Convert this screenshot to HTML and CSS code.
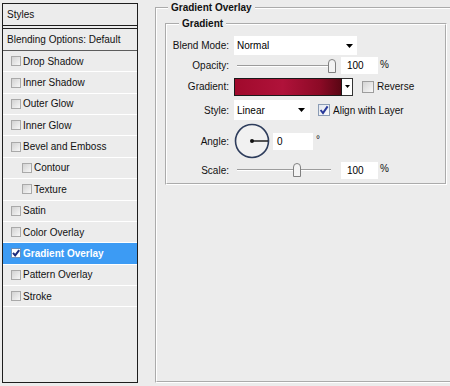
FILE: index.html
```html
<!DOCTYPE html>
<html>
<head>
    <link rel="stylesheet" href="styles.css">
</head>
<body>
    <div class="styles-list">
        <div class="list-head">Styles</div>
        <div class="list-blend">Blending Options: Default</div>
        <div class="list-item"><span class="check"></span>Drop Shadow</div>
        <div class="list-item"><span class="check"></span>Inner Shadow</div>
        <div class="list-item"><span class="check"></span>Outer Glow</div>
        <div class="list-item"><span class="check"></span>Inner Glow</div>
        <div class="list-item"><span class="check"></span>Bevel and Emboss</div>
        <div class="list-item sub"><span class="check"></span>Contour</div>
        <div class="list-item sub"><span class="check"></span>Texture</div>
        <div class="list-item"><span class="check"></span>Satin</div>
        <div class="list-item"><span class="check"></span>Color Overlay</div>
        <div class="list-item active"><span class="check on"><svg width="10" height="10" viewBox="0 0 10 10"><path d="M2 4.8 L4.2 7.4 L8.2 2.2" fill="none" stroke="#1b2a7c" stroke-width="2"/></svg></span>Gradient Overlay</div>
        <div class="list-item"><span class="check"></span>Pattern Overlay</div>
        <div class="list-item"><span class="check"></span>Stroke</div>
    </div>

    <fieldset class="group outer">
        <legend>Gradient Overlay</legend>
        <fieldset class="group inner">
            <legend>Gradient</legend>
            <div class="form">
                <div class="lbl">Blend Mode:</div>
                <div class="ctl">
                    <div class="select blend">Normal<svg width="7" height="4" viewBox="0 0 7 4"><path d="M0 0 H7 L3.5 4 Z" fill="#000"/></svg></div>
                </div>

                <div class="lbl">Opacity:</div>
                <div class="ctl">
                    <div class="slider">
                        <div class="track"></div>
                        <svg class="thumb opacity-thumb" width="8" height="14" viewBox="0 0 8 14"><path d="M0.5 4 Q0.5 0.5 4 0.5 Q7.5 0.5 7.5 4 V13.5 H0.5 Z" fill="#f3f3f3" stroke="#808080"/></svg>
                    </div>
                    <div class="num">100</div>
                    <span class="unit">%</span>
                </div>

                <div class="lbl">Gradient:</div>
                <div class="ctl">
                    <div class="swatch"></div>
                    <div class="swatch-drop"><svg width="5" height="3" viewBox="0 0 5 3"><path d="M0 0 H5 L2.5 3 Z" fill="#000"/></svg></div>
                    <span class="box reverse-box"></span>
                    <span class="box-text">Reverse</span>
                </div>

                <div class="lbl">Style:</div>
                <div class="ctl">
                    <div class="select style-select">Linear<svg width="7" height="4" viewBox="0 0 7 4"><path d="M0 0 H7 L3.5 4 Z" fill="#000"/></svg></div>
                    <span class="box align-box"><svg width="10" height="10" viewBox="0 0 10 10"><path d="M1.6 5 L4 8 L8.6 1.4" fill="none" stroke="#28399a" stroke-width="2"/></svg></span>
                    <span class="box-text">Align with Layer</span>
                </div>

                <div class="lbl">Angle:</div>
                <div class="ctl">
                    <svg class="dial" width="36" height="36" viewBox="0 0 36 36">
                        <circle cx="18" cy="18" r="16.5" fill="#f1f1f1" stroke="#2e3d5c" stroke-width="1.6"/>
                        <line x1="18" y1="18" x2="34" y2="18" stroke="#111" stroke-width="1.4"/>
                        <circle cx="18" cy="18" r="2" fill="#111"/>
                    </svg>
                    <div class="num angle-num">0</div>
                    <span class="deg">°</span>
                </div>

                <div class="lbl">Scale:</div>
                <div class="ctl">
                    <div class="slider">
                        <div class="track"></div>
                        <svg class="thumb scale-thumb" width="8" height="14" viewBox="0 0 8 14"><path d="M0.5 4 Q0.5 0.5 4 0.5 Q7.5 0.5 7.5 4 V13.5 H0.5 Z" fill="#f3f3f3" stroke="#808080"/></svg>
                    </div>
                    <div class="num">100</div>
                    <span class="unit">%</span>
                </div>
            </div>
        </fieldset>
    </fieldset>
</body>
</html>
```

FILE: styles.css
```css
html, body {
    margin: 0;
    height: 386px;
    overflow: hidden;
}
body {
    background: #ececec;
    font-family: "Liberation Sans", Arial, sans-serif;
    font-size: 10px;
    color: #111;
    display: flex;
    align-items: flex-start;
}

/* left list */
.styles-list {
    box-sizing: border-box;
    width: 136px;
    height: 380px;
    margin: 3px 0 0 2px;
    border: 1px solid #1e1e1e;
    flex-shrink: 0;
}
.list-head {
    height: 21px;
    line-height: 21px;
    padding-left: 4px;
    border-bottom: 4px double #1e1e1e;
}
.list-blend {
    height: 21px;
    line-height: 21px;
    padding-left: 4px;
    border-bottom: 1px solid #5c5c5c;
}
.list-item {
    display: flex;
    align-items: center;
    height: 20.37px;
    padding-left: 8px;
    border-bottom: 1px solid #fff;
}
.list-item.sub {
    padding-left: 19px;
}
.list-item.active {
    background: #3c9bf4;
    color: #fff;
    font-weight: bold;
}
.check {
    box-sizing: border-box;
    width: 10px;
    height: 10px;
    margin-right: 2px;
    border: 1px solid #a9a9a9;
    background: linear-gradient(135deg, #d2d2d2, #f7f7f7);
}
.check.on {
    background: #fff;
    border-color: #6c8fb8;
}
.check svg {
    display: block;
    margin: -1px 0 0 -1px;
}

/* group boxes */
.group {
    margin: 0;
    padding: 0;
    min-width: 0;
    border: 2px groove #fff;
}
.group legend {
    font-weight: bold;
    line-height: 12px;
    padding: 0 3px;
}
.outer {
    box-sizing: border-box;
    width: 300px;
    height: 381px;
    margin: 2px 0 0 17px;
    flex-shrink: 0;
}
.outer > legend {
    margin-left: 11px;
}
.inner {
    box-sizing: border-box;
    width: 282px;
    margin: 4px 0 0 8px;
    padding: 6px 0 4px;
}
.inner > legend {
    margin-left: 12px;
}

.form {
    display: grid;
    grid-template-columns: 62px auto;
    grid-template-rows: 19px 17px 21px 22px 36px 18px;
    row-gap: 2px;
    column-gap: 5px;
}
.lbl {
    text-align: right;
    align-self: center;
}
.ctl {
    display: flex;
    align-items: center;
}

.select {
    box-sizing: border-box;
    height: 19px;
    background: #fff;
    display: flex;
    align-items: center;
    justify-content: space-between;
    padding: 0 4px 0 3px;
    color: #000;
}
.blend {
    width: 123px;
}
.style-select {
    width: 76px;
    height: 20px;
    padding-right: 5px;
}

.slider {
    position: relative;
    width: 104px;
    height: 14px;
}
.track {
    position: absolute;
    left: 3px;
    right: 7px;
    top: 6px;
    height: 1px;
    background: #9c9c9c;
    border-bottom: 1px solid #fff;
}
.thumb {
    position: absolute;
    top: 0;
}
.opacity-thumb {
    left: 94px;
}
.scale-thumb {
    left: 59px;
}

.num {
    box-sizing: border-box;
    width: 37px;
    height: 17px;
    line-height: 17px;
    margin-left: 3px;
    padding-left: 6px;
    background: #fff;
    color: #000;
}
.unit {
    margin-left: 2px;
    margin-top: -3px;
}

.swatch {
    box-sizing: border-box;
    width: 108px;
    height: 18px;
    border: 1px solid #1a1a1a;
    background: linear-gradient(to right, #a00a2c 0%, #b0123a 45%, #8c0a26 80%, #5a0614 100%);
}
.swatch-drop {
    box-sizing: border-box;
    width: 11px;
    height: 18px;
    border: 1px solid #333;
    border-left: none;
    background: #fff;
    display: flex;
    align-items: center;
    justify-content: center;
}
.box {
    box-sizing: border-box;
    width: 12px;
    height: 12px;
    border: 1px solid #9d9d9d;
    background: linear-gradient(135deg, #d4d4d4, #f8f8f8);
}
.reverse-box {
    margin-left: 9px;
}
.align-box {
    margin-left: 8px;
    border-color: #8a9bb4;
    background: linear-gradient(135deg, #e2e6ee, #fafafa);
}
.align-box svg {
    display: block;
}
.box-text {
    margin-left: 3px;
}

.dial {
    display: block;
}
.angle-num {
    width: 40px;
    padding-left: 4px;
}
.deg {
    margin-left: 3px;
    align-self: flex-start;
    margin-top: 11px;
}
```
